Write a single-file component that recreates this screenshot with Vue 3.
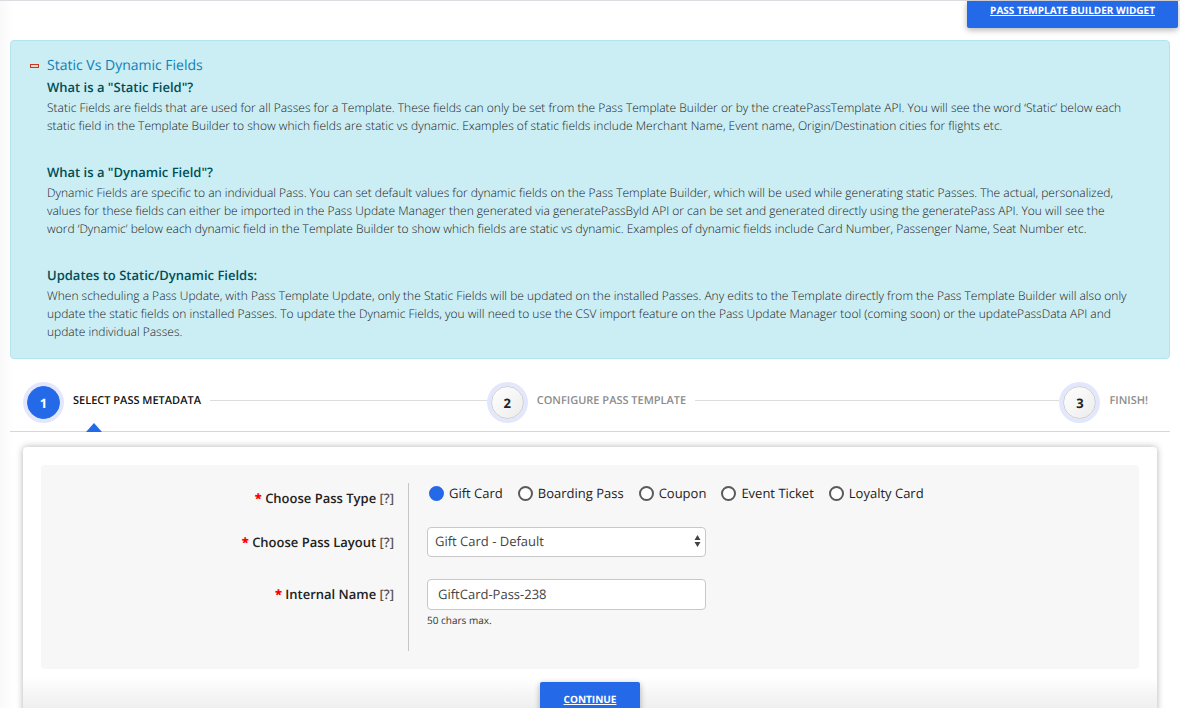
<script setup>
import { ref } from 'vue'

const sections = [
  {
    title: 'What is a "Static Field"?',
    text: 'Static Fields are fields that are used for all Passes for a Template. These fields can only be set from the Pass Template Builder or by the createPassTemplate API. You will see the word ‘Static’ below each static field in the Template Builder to show which fields are static vs dynamic. Examples of static fields include Merchant Name, Event name, Origin/Destination cities for flights etc.'
  },
  {
    title: 'What is a "Dynamic Field"?',
    text: 'Dynamic Fields are specific to an individual Pass. You can set default values for dynamic fields on the Pass Template Builder, which will be used while generating static Passes. The actual, personalized, values for these fields can either be imported in the Pass Update Manager then generated via generatePassById API or can be set and generated directly using the generatePass API. You will see the word ‘Dynamic’ below each dynamic field in the Template Builder to show which fields are static vs dynamic. Examples of dynamic fields include Card Number, Passenger Name, Seat Number etc.'
  },
  {
    title: 'Updates to Static/Dynamic Fields:',
    text: 'When scheduling a Pass Update, with Pass Template Update, only the Static Fields will be updated on the installed Passes. Any edits to the Template directly from the Pass Template Builder will also only update the static fields on installed Passes. To update the Dynamic Fields, you will need to use the CSV import feature on the Pass Update Manager tool (coming soon) or the updatePassData API and update individual Passes.'
  }
]
const types = ['Gift Card', 'Boarding Pass', 'Coupon', 'Event Ticket', 'Loyalty Card']
const passType = ref('Gift Card')
const layout = ref('Gift Card - Default')
const internalName = ref('GiftCard-Pass-238')
</script>

<template>
  <div class="page">
    <header class="top">
      <a class="btn widget" href="#widget">PASS TEMPLATE BUILDER WIDGET</a>
    </header>

    <section class="info">
      <a class="toggle" href="#fields">
        <svg class="minus" width="10" height="5" viewBox="0 0 10 5" aria-hidden="true">
          <rect x="0.5" y="0.5" width="8" height="3" fill="#f7d9cb" stroke="#c9381c" />
        </svg>
        <span>Static Vs Dynamic Fields</span>
      </a>
      <div v-for="s in sections" :key="s.title" class="topic">
        <h2>{{ s.title }}</h2>
        <p>{{ s.text }}</p>
      </div>
    </section>

    <nav class="steps">
      <div class="step active"><span class="num">1</span><span class="name">SELECT PASS METADATA</span></div>
      <span class="line first"></span>
      <div class="step"><span class="num">2</span><span class="name">CONFIGURE PASS TEMPLATE</span></div>
      <span class="line second"></span>
      <div class="step"><span class="num">3</span><span class="name">FINISH!</span></div>
      <span class="pointer"></span>
    </nav>

    <form class="card" @submit.prevent>
      <div class="panel">
        <div class="grid">
          <div class="cell label"><span id="type-label"><b>*</b> Choose Pass Type <i>[?]</i></span></div>
          <div class="cell field types" role="radiogroup" aria-labelledby="type-label">
            <label v-for="t in types" :key="t" class="radio">
              <input v-model="passType" type="radio" name="type" :value="t" />{{ t }}
            </label>
          </div>

          <div class="cell label"><label for="layout"><b>*</b> Choose Pass Layout <i>[?]</i></label></div>
          <div class="cell field layout-field">
            <div class="select">
              <select id="layout" v-model="layout"><option>Gift Card - Default</option></select>
              <svg class="arrows" width="7" height="12" viewBox="0 0 7 12" aria-hidden="true">
                <path d="M3.5 0 6.5 5h-6zM3.5 12 .5 7h6z" fill="#444" />
              </svg>
            </div>
          </div>

          <div class="cell label"><label for="name"><b>*</b> Internal Name <i>[?]</i></label></div>
          <div class="cell field name-field">
            <input id="name" v-model="internalName" class="text" type="text" maxlength="50" />
            <small>50 chars max.</small>
          </div>
        </div>
      </div>
      <div class="actions">
        <button class="btn continue" type="submit">CONTINUE</button>
      </div>
    </form>
  </div>
</template>

<style>
html {
  scrollbar-width: none;
}
</style>

<style scoped>
* {
  box-sizing: border-box;
}
.page {
  min-height: 100vh;
  padding: 0 10px;
  border-top: 1px solid #dcdce0;
  background: linear-gradient(to right, #f9f9f9, #fff 14px);
  font-family: "Open Sans", "Noto Sans", sans-serif;
  font-size: 13px;
  line-height: 18px;
  text-rendering: geometricPrecision;
  color: #222;
}
.btn {
  border: 0;
  border-radius: 2px;
  background: #2369e8;
  box-shadow: 0 2px 6px rgba(0, 0, 0, 0.3);
  color: #fff;
  font-family: inherit;
  font-size: 10px;
  font-weight: 700;
  line-height: 18px;
  text-decoration: underline;
  text-rendering: inherit;
}
.top {
  display: flex;
  justify-content: flex-end;
  margin-right: -8px;
}
.widget {
  padding: 0 23px 9px;
  border-radius: 0 0 2px 2px;
}
.info {
  margin-top: 12px;
  padding: 14px 37px 17px 36px;
  border: 1px solid #b3e6ec;
  border-radius: 4px;
  background: #cbedf4;
}
.toggle {
  display: flex;
  align-items: center;
  gap: 7px;
  margin-left: -17px;
  color: #0f80b6;
  font-size: 14px;
  line-height: 22px;
  text-decoration: none;
}
.topic + .topic {
  margin-top: 27px;
}
h2 {
  margin: 0 0 2px;
  color: #004f55;
  font-size: 13px;
  font-weight: 600;
  line-height: 20px;
}
p {
  margin: 0;
  color: #1a1a1a;
  font-size: 12px;
  font-weight: 300;
  line-height: 18px;
}
.steps {
  position: relative;
  display: flex;
  align-items: flex-start;
  padding: 27px 22px 12px 17px;
  border-bottom: 1px solid #cdd6f8;
}
.step {
  display: flex;
  gap: 13px;
  font-size: 11px;
  font-weight: 600;
  color: #8c8c8c;
}
.num {
  display: flex;
  align-items: center;
  justify-content: center;
  width: 33px;
  height: 33px;
  border: 1px solid #ccc;
  border-radius: 50%;
  background: linear-gradient(135deg, #fff, #ececec);
  box-shadow: 0 0 0 4px #e2e7fd;
  color: #222;
  font-size: 13px;
  font-weight: 700;
}
.name {
  padding-top: 6px;
  white-space: nowrap;
}
.active {
  color: #111;
}
.active .num {
  border-color: #2369e8;
  background: #2369e8;
  color: #fff;
}
.line {
  height: 1px;
  margin: 14px 4px 0 9px;
  background: #ddd;
}
.first {
  flex: 76 1 0;
}
.second {
  flex: 100 1 0;
}
.pointer {
  position: absolute;
  bottom: -1px;
  left: 76px;
  border: 8px solid transparent;
  border-top: 0;
  border-bottom: 9px solid #2369e8;
}
.card {
  margin: 15px 13px 0;
  padding: 18px 18px 0;
  border-radius: 4px;
  background: #fff;
  box-shadow: 0 0 7px rgba(0, 0, 0, 0.3);
}
.panel {
  padding: 18px 0;
  border-radius: 4px;
  background: #f7f7f7;
}
.grid {
  display: grid;
  grid-template-columns: 368fr 730fr;
}
.label {
  padding-top: 6px;
  padding-right: 14px;
  border-right: 1px solid #c6c6c6;
  color: #222;
  font-weight: 600;
  text-align: right;
}
.label b {
  color: #f00;
}
.label i {
  color: #555;
  font-style: normal;
}
.field {
  padding-left: 18px;
}
.types {
  display: flex;
  gap: 15px;
  padding: 1px 0 25px 20px;
}
.radio {
  display: flex;
  align-items: center;
  gap: 5px;
  white-space: nowrap;
}
.radio input {
  appearance: none;
  width: 15px;
  height: 15px;
  margin: 0;
  border: 2px solid #5a5a5a;
  border-radius: 50%;
  background: #fff;
}
.radio input:checked {
  border-color: #2369e8;
  background: #2369e8;
}
.layout-field {
  padding-bottom: 22px;
}
.select {
  position: relative;
  width: 279px;
  height: 30px;
}
select,
.text {
  display: block;
  width: 279px;
  height: 30px;
  border: 1px solid #c8c8c8;
  border-radius: 4px;
  background: #fff;
  color: #444;
  font-family: inherit;
  font-size: 13px;
  text-rendering: inherit;
}
select {
  appearance: none;
  padding: 0 18px 2px 7px;
}
.text {
  height: 31px;
  padding: 0 10px 1px;
}
.arrows {
  position: absolute;
  top: 8px;
  right: 5px;
}
.name-field {
  padding-bottom: 22px;
}
small {
  display: block;
  margin-top: 1px;
  color: #333;
  font-size: 10px;
  line-height: 18px;
}
.actions {
  display: flex;
  justify-content: center;
  margin: 0 -18px;
  padding: 13px 0 0;
  background: linear-gradient(#fff 8px, #ededed 42px);
}
.continue {
  width: 100px;
  height: 36px;
  padding: 0 0 3px;
}
</style>
